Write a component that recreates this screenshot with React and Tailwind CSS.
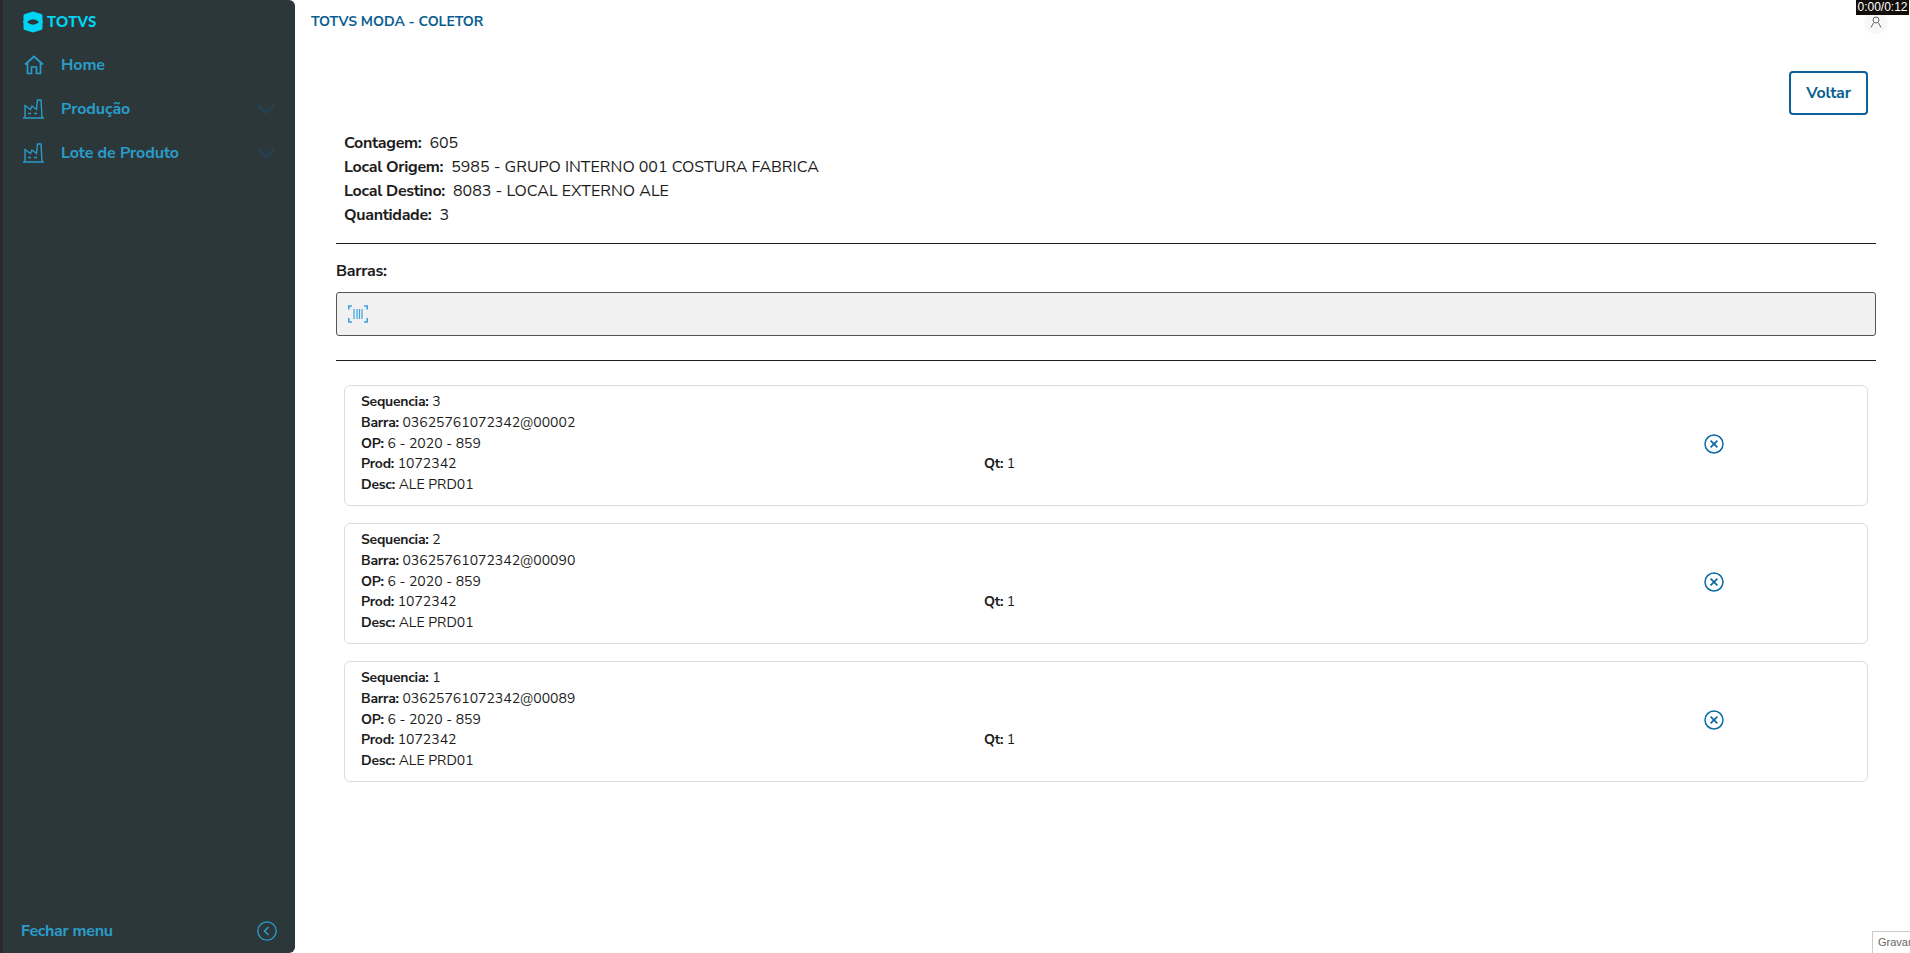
import React from "react";

function Logo() {
  return (
    <svg width="20" height="22" viewBox="0 0 20 22" className="shrink-0">
      <path d="M10 0.5 L18.2 3 Q19.5 3.5 19.5 5 V17 Q19.5 18.5 18.2 19 L10 21.5 L1.8 19 Q0.5 18.5 0.5 17 V5 Q0.5 3.5 1.8 3 Z" fill="#00d4f5" />
      <path d="M4 11 Q10 5.5 16 11 Q10 16.5 4 11 Z" fill="#2c3739" />
      <path d="M0 10.2 H4 V11.8 H0 Z M16 10.2 H20 V11.8 H16 Z" fill="#00d4f5" />
    </svg>
  );
}

function Home() {
  return (
    <svg width="20" height="20" viewBox="0 0 20 20" fill="none" stroke="#2a9cc8" strokeWidth="1.7" className="shrink-0 ml-[1px]">
      <path d="M1 9.5 L10 1.5 L19 9.5 M3.5 8 V18.5 H7.5 V12 H12.5 V18.5 H16.5 V8" />
    </svg>
  );
}

function Factory() {
  return (
    <svg width="21" height="20" viewBox="0 0 21 20" fill="none" stroke="#2a9cc8" strokeWidth="1.4" className="shrink-0">
      <path d="M0 19 H21 M2 19 V6.5 L7.5 10.5 L9 7 L13.5 10.5 L14.5 1 H18 L19 19" />
      <path d="M5 14.5 H8 M11 14.5 H14" />
    </svg>
  );
}

function Chevron() {
  return (
    <svg width="18" height="10" viewBox="0 0 18 10" fill="none" stroke="#1d4a6b" strokeWidth="1.2">
      <path d="M1 1 L9 9 L17 1" />
    </svg>
  );
}

function NavItem({ icon, label, chevron }) {
  return (
    <div className="h-11 flex items-center pl-[20px] pr-[20px]">
      <div className="w-[38px] shrink-0">{icon}</div>
      <span className="flex-1 text-[16px] font-bold tracking-[-0.1px] text-[#2a9cc8]">{label}</span>
      {chevron && <Chevron />}
    </div>
  );
}

function Info({ label, value }) {
  return (
    <div className="h-6 leading-6 text-[16px] text-[#1c1c1c]">
      <span className="font-bold tracking-[-0.3px]">{label}:</span>
      <span className="ml-[8px]">{value}</span>
    </div>
  );
}

function Line({ label, value }) {
  return (
    <div className="h-[20.8px] leading-[20.8px] text-[14px] text-[#1c1c1c]">
      <span className="font-bold tracking-[-0.25px]">{label}:</span> {value}
    </div>
  );
}

function Card({ seq, barra }) {
  return (
    <div className="h-[121px] border border-[#dcdcdc] rounded-[6px] flex items-start pl-[16px] pt-[6px] bg-white">
      <div className="w-[623px] shrink-0">
        <Line label="Sequencia" value={seq} />
        <Line label="Barra" value={barra} />
        <Line label="OP" value="6 - 2020 - 859" />
        <Line label="Prod" value="1072342" />
        <Line label="Desc" value="ALE PRD01" />
      </div>
      <div className="w-[720px] shrink-0 pt-[62px]">
        <Line label="Qt" value="1" />
      </div>
      <svg width="20" height="20" viewBox="0 0 20 20" fill="none" stroke="#0b6aa2" strokeWidth="1.5" className="mt-[42px] shrink-0">
        <circle cx="10" cy="10" r="9" />
        <path d="M6.6 6.6 L13.4 13.4 M13.4 6.6 L6.6 13.4" strokeWidth="1.7" />
      </svg>
    </div>
  );
}

export default function App() {
  return (
    <div className="relative h-[953px] w-[1910px] flex overflow-hidden bg-white font-['Nunito_Sans','Lato','Noto_Sans',sans-serif]">
      <aside className="w-[295px] h-full shrink-0 bg-[#2c3739] border-l-[3px] border-[#2a2a2a] rounded-r-[6px] flex flex-col">
        <div className="h-[43px] flex items-center gap-[4px] pl-[20px]">
          <Logo />
          <span className="text-[15px] font-black tracking-[0.3px] text-[#00d4f5] font-['Lato',sans-serif]">TOTVS</span>
        </div>
        <div>
          <NavItem icon={<Home />} label="Home" />
          <NavItem icon={<Factory />} label="Produção" chevron />
          <NavItem icon={<Factory />} label="Lote de Produto" chevron />
        </div>
        <div className="mt-auto h-[44px] flex items-center justify-between pl-[18px] pr-[18px]">
          <span className="text-[16px] font-bold tracking-[-0.3px] text-[#2a9cc8]">Fechar menu</span>
          <svg width="20" height="20" viewBox="0 0 20 20" fill="none" stroke="#2a9cc8" strokeWidth="1.3">
            <circle cx="10" cy="10" r="9.2" />
            <path d="M11.5 6 L7.5 10 L11.5 14" strokeWidth="1.6" />
          </svg>
        </div>
      </aside>

      <main className="flex-1 min-w-0 flex flex-col">
        <header className="h-[43px] pl-[16px] flex items-center">
          <span className="text-[14px] font-bold text-[#0b5f8f]">TOTVS MODA - COLETOR</span>
        </header>
        <div className="pl-[41px] pr-[34px]">
          <div className="h-[88px] pt-[28px] flex justify-end pr-[8px]">
            <button className="w-[79px] h-[44px] border-2 border-[#0b5f9a] rounded-[4px] text-[16px] font-bold tracking-[-0.2px] text-[#0b5f8f]">Voltar</button>
          </div>
          <div className="pl-[8px]">
            <Info label="Contagem" value="605" />
            <Info label="Local Origem" value="5985 - GRUPO INTERNO 001 COSTURA FABRICA" />
            <Info label="Local Destino" value="8083 - LOCAL EXTERNO ALE" />
            <Info label="Quantidade" value="3" />
          </div>
          <hr className="mt-[16px] border-t border-[#1c1c1c]" />
          <div className="mt-[15px] h-6 leading-6 text-[16px] font-bold tracking-[-0.3px] text-[#1c1c1c]">Barras:</div>
          <div className="mt-[9px] h-[44px] rounded-[3px] border border-[#555] bg-[#f1f1f1] flex items-center pl-[11px]">
            <svg width="20" height="18" viewBox="0 0 20 18" fill="none" stroke="#3fa2dc" strokeWidth="1.2">
              <path d="M4 1 H0.8 V4.5 M16 1 H19.2 V4.5 M4 17 H0.8 V13 M16 17 H19.2 V13" strokeWidth="1.6" />
              <path d="M6 4 V14 M9 4 V14 M11.5 4 V14 M14 4 V14" />
            </svg>
          </div>
          <hr className="mt-[24px] border-t border-[#1c1c1c]" />
          <div className="mt-[24px] mx-[8px] flex flex-col gap-[17px]">
            <Card seq="3" barra="03625761072342@00002" />
            <Card seq="2" barra="03625761072342@00090" />
            <Card seq="1" barra="03625761072342@00089" />
          </div>
        </div>
      </main>

      <div className="absolute top-[10px] right-[22px] w-[24px] h-[24px] rounded-full bg-[#f7f7f7] flex items-center justify-center">
        <svg width="12" height="12" viewBox="0 0 12 12" fill="none" stroke="#555" strokeWidth="0.9">
          <circle cx="6" cy="4" r="3" />
          <path d="M1 11.5 L3.5 7 M11 11.5 L8.5 7" />
        </svg>
      </div>
      <div className="absolute top-0 right-[1px] w-[53px] h-[15px] bg-[#120d0a] text-white text-[12px] leading-[15px] text-center font-['Liberation_Sans',sans-serif]">0:00/0:12</div>
      <div className="absolute top-[931px] right-0 w-[38px] h-[22px] border-l border-t border-[#ccc] bg-white text-[#666] text-[11px] leading-[20px] pl-[5px] overflow-hidden whitespace-nowrap font-['Liberation_Sans',sans-serif]">Gravar</div>
    </div>
  );
}
